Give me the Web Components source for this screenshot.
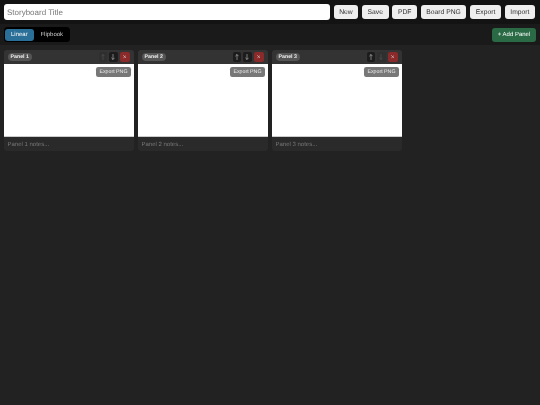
<!DOCTYPE html>
<html><head><meta charset="utf-8"><style>
html,body{margin:0;height:100%;background:#222;font-family:"Liberation Sans",Arial,sans-serif;overflow:hidden}
</style></head><body>
<sb-app>
<sb-header></sb-header>
<sb-tabs></sb-tabs>
<sb-board>
<sb-panel name="Panel 1" notes="Panel 1 notes..." first></sb-panel>
<sb-panel name="Panel 2" notes="Panel 2 notes..."></sb-panel>
<sb-panel name="Panel 3" notes="Panel 3 notes..." last></sb-panel>
</sb-board>
</sb-app>
<script>
class SbApp extends HTMLElement{constructor(){super();this.attachShadow({mode:'open'}).innerHTML=`<style>
:host{display:flex;flex-direction:column;width:540px;height:405px;overflow:hidden;background:#222;filter:blur(.3px);text-rendering:geometricPrecision}
</style><slot></slot>`}}
class SbHeader extends HTMLElement{constructor(){super();this.attachShadow({mode:'open'}).innerHTML=`<style>
:host{display:flex;align-items:center;gap:3.75px;padding:0 5px 0 4px;background:#131313;height:24px;flex:none}
.t{flex:1;min-width:0;box-sizing:border-box;height:16px;border:0;border-radius:3px;background:#fff;padding:0 3px;font:8px "Liberation Sans",Arial,sans-serif;text-rendering:geometricPrecision;outline:0}
.t::placeholder{color:#777;opacity:1}
button{box-sizing:border-box;height:14px;border:0;border-radius:3px;background:#eee;color:#333;font:6.75px "Liberation Sans",Arial,sans-serif;text-rendering:geometricPrecision;padding:0 5.6px;white-space:nowrap}
</style><input class="t" placeholder="Storyboard Title"><button>New</button><button>Save</button><button>PDF</button><button>Board PNG</button><button>Export</button><button>Import</button>`}}
class SbTabs extends HTMLElement{constructor(){super();this.attachShadow({mode:'open'}).innerHTML=`<style>
:host{display:flex;align-items:center;justify-content:space-between;height:21px;padding:0 4.5px 0 4px;background:#1a1a1a;flex:none}
.g{display:flex;gap:.75px;background:#000;border-radius:3.5px;padding:1.5px 1px;height:12px}
button{box-sizing:border-box;height:12px;border:0;border-radius:3px;background:transparent;color:#ccc;font:6px "Liberation Sans",Arial,sans-serif;text-rendering:geometricPrecision;padding:0 6px}
.on{background:#2a6f97;color:#fff}
.add{background:#2a6b45;color:#fff;height:14px;padding:0 5.25px;white-space:nowrap}
</style><div class="g"><button class="on">Linear</button><button>Flipbook</button></div><button class="add">+ Add Panel</button>`}}
class SbBoard extends HTMLElement{constructor(){super();this.attachShadow({mode:'open'}).innerHTML=`<style>
:host{display:flex;flex:1;align-items:flex-start;gap:4px;padding:5px 4px;background:#222}
</style><slot></slot>`}}
class SbPanel extends HTMLElement{connectedCallback(){if(this.shadowRoot)return;const f=this.hasAttribute('first'),l=this.hasAttribute('last');
this.attachShadow({mode:'open'}).innerHTML=`<style>
:host{display:flex;flex-direction:column;width:130px;background:#2a2a2a;border-radius:3px;overflow:hidden;flex:none}
.h{display:flex;align-items:center;justify-content:space-between;height:14px;padding:0 4.5px 0 3.5px;background:#333;flex:none}
.n{background:#555;color:#eee;font:bold 5.25px/8px "Liberation Sans",Arial,sans-serif;text-rendering:geometricPrecision;border-radius:4px;padding:0 3px;height:8px}
.c{display:flex;gap:2px}
.c button{display:flex;align-items:center;justify-content:center;box-sizing:border-box;width:8.25px;height:9.5px;padding:0;border:0;border-radius:2px;background:#1c1c1c}
.c svg{width:4px;height:6px;fill:none;stroke:#ccc;stroke-width:.55;stroke-linecap:round;stroke-linejoin:round}
.c button[disabled]{background:#2f2f2f}
.c button[disabled] svg{stroke:#5a5a5a}
.c .x{background:#8a2a2a;width:10px}
.c .x svg{width:3.5px;height:3.5px;stroke:#eee}
.cv{height:73px;background:#fff;display:flex;justify-content:flex-end;align-items:flex-start;padding:3px 3px 0 0;box-sizing:border-box;border-bottom:1px solid #ccc}
.e{box-sizing:border-box;height:9.5px;border:0;border-radius:2.25px;background:#777;color:#eee;font:5.25px "Liberation Sans",Arial,sans-serif;text-rendering:geometricPrecision;padding:0 3.5px;white-space:nowrap}
.o{height:14px;padding:2px 3.5px 0;box-sizing:border-box;color:#777;font:6px/12px "Liberation Sans",Arial,sans-serif}
</style><div class="h"><span class="n">${this.getAttribute('name')}</span><span class="c"><button aria-label="up" ${f?'disabled':''}><svg viewBox="0 0 4 6"><path d="M2 5.6V.6M.6 2 2 .6 3.4 2"/></svg></button><button aria-label="down" ${l?'disabled':''}><svg viewBox="0 0 4 6"><path d="M2 .4v5M.6 4 2 5.4 3.4 4"/></svg></button><button class="x" aria-label="delete"><svg viewBox="0 0 4 4"><path d="M.5.5l3 3M3.5.5l-3 3"/></svg></button></span></div><div class="cv"><button class="e">Export PNG</button></div><div class="o">${this.getAttribute('notes')}</div>`}}
customElements.define('sb-app',SbApp);customElements.define('sb-header',SbHeader);customElements.define('sb-tabs',SbTabs);customElements.define('sb-board',SbBoard);customElements.define('sb-panel',SbPanel);
</script></body></html>
